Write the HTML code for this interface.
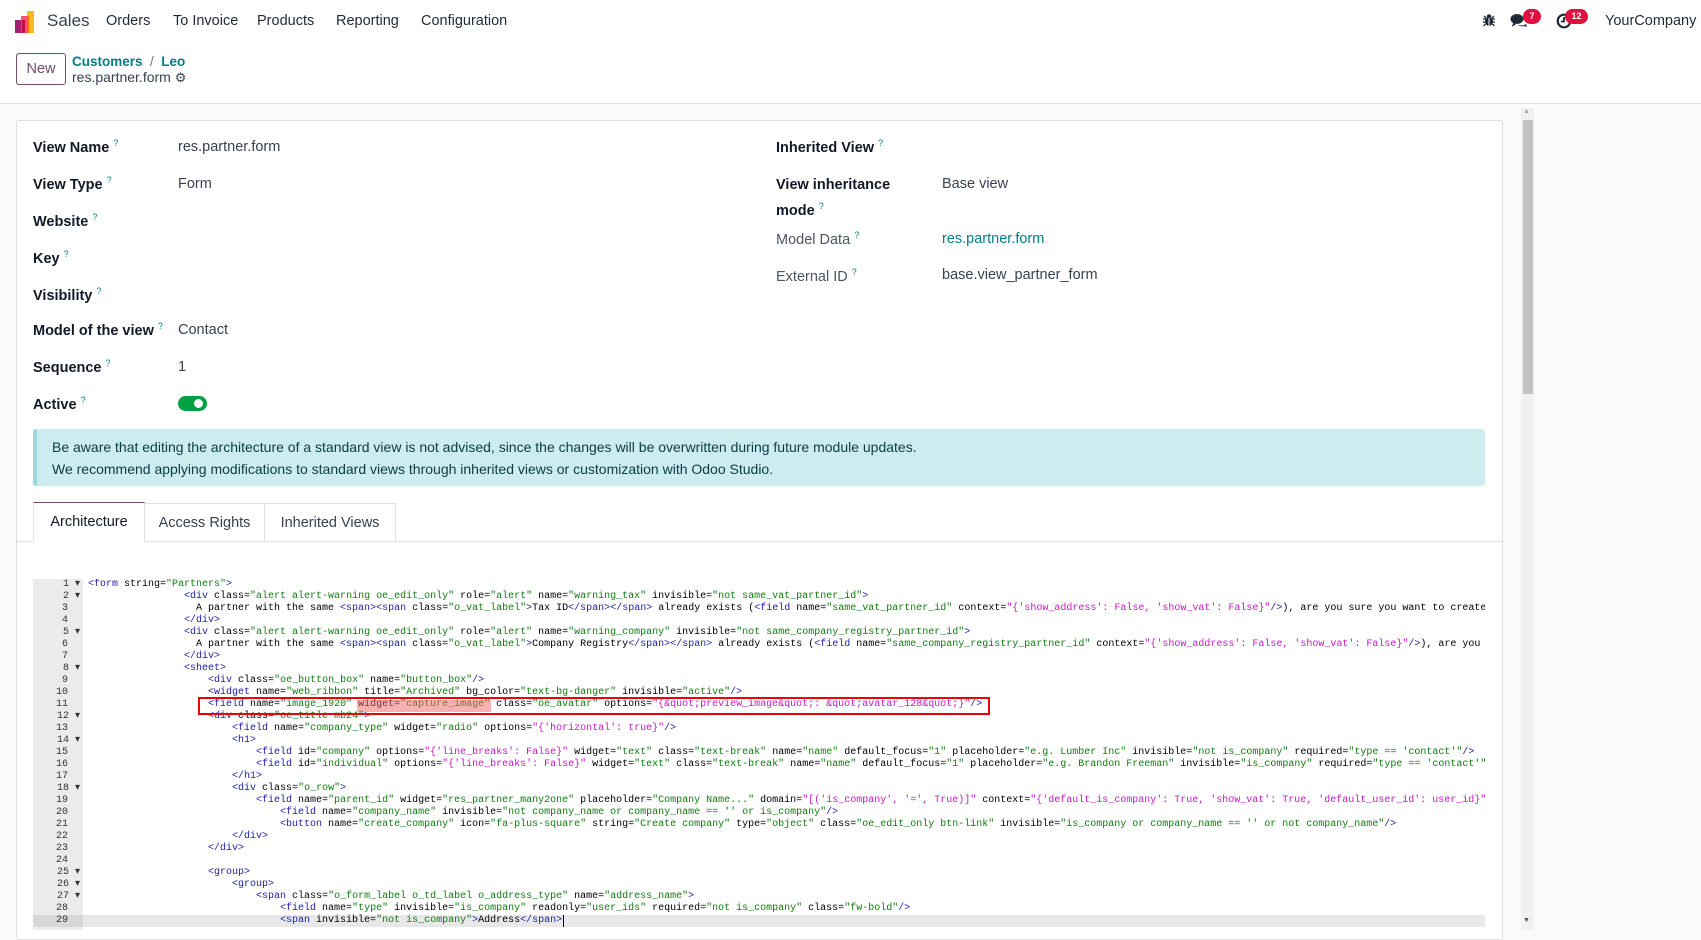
<!DOCTYPE html>
<html><head><meta charset="utf-8">
<style>
*{box-sizing:border-box;margin:0;padding:0}
body{width:1701px;height:930px;overflow:hidden;background:#f9fafb;font-family:"Liberation Sans",sans-serif;color:#374151;position:relative;font-size:14px}
.abs{position:absolute;white-space:nowrap}
#top{position:absolute;left:0;top:0;width:1701px;height:104px;background:#fff;border-bottom:1px solid #dcdfe3}
.menu{font-size:14.5px;color:#1f2937;top:13px}
.lbl{font-weight:bold;color:#111827;font-size:14.5px}
.lbl sup,.lbl2 sup{color:#017e84;font-size:9px;font-weight:normal}
.lbl2{color:#4b5563;font-size:14.5px}
.val{color:#374151;font-size:14.5px}
#card{position:absolute;left:16px;top:120px;width:1487px;height:820px;background:#fff;border:1px solid #dcdfe3;border-radius:3px}
pre{font-family:"Liberation Mono",monospace;font-size:10px;line-height:12px;color:#000;white-space:pre}
.t{color:#1d1da8}.v{color:#117a11}.m{color:#c617c6}
.badge{position:absolute;background:#e0103f;color:#fff;font-size:9px;font-weight:bold;border-radius:8px;height:15px;line-height:15px;text-align:center}
</style></head><body>
<div id="top"></div>
<div class="abs" style="left:15px;top:20px;width:8px;height:13px;background:#a3206f"></div>
<div class="abs" style="left:21px;top:16px;width:7px;height:17px;background:#f0465a;opacity:.9"></div>
<div class="abs" style="left:22px;top:20px;width:3px;height:13px;background:#c10f45"></div>
<div class="abs" style="left:27px;top:11px;width:7px;height:22px;background:#fbb823"></div>
<div class="abs" style="left:27px;top:16px;width:2px;height:17px;background:#f86a12"></div>
<div class="abs" style="left:47px;top:11px;font-size:17px;color:#374151">Sales</div>
<div class="abs menu" style="left:106px">Orders</div>
<div class="abs menu" style="left:173px">To Invoice</div>
<div class="abs menu" style="left:257px">Products</div>
<div class="abs menu" style="left:336px">Reporting</div>
<div class="abs menu" style="left:421px">Configuration</div>
<svg class="abs" style="left:1482px;top:13px" width="14" height="14" viewBox="0 0 14 14"><ellipse cx="7" cy="8.5" rx="4" ry="4.5" fill="#1f2937"/><circle cx="7" cy="3.5" r="2.3" fill="#1f2937"/><path d="M1 6h12M1 9h12M1.5 13l2-2M12.5 13l-2-2M2 3l2 2M12 3l-2 2" stroke="#1f2937" stroke-width="1.3"/><path d="M7 5v8" stroke="#fff" stroke-width="1"/></svg>
<svg class="abs" style="left:1510px;top:13px" width="18" height="16" viewBox="0 0 18 16"><ellipse cx="7" cy="6" rx="6.5" ry="5" fill="#1f2937"/><path d="M3 10l-1 4 4-3z" fill="#1f2937"/><path d="M9 12q4 1 7-1l1 3-3-1q-3 1-6-1z" fill="#1f2937"/></svg>
<div class="badge" style="left:1523px;top:9px;width:18px">7</div>
<svg class="abs" style="left:1556px;top:13px" width="16" height="16" viewBox="0 0 16 16"><circle cx="8" cy="8" r="6.3" fill="none" stroke="#1f2937" stroke-width="2.2"/><path d="M8 4v4.5h-3" fill="none" stroke="#1f2937" stroke-width="1.8"/></svg>
<div class="badge" style="left:1565px;top:9px;width:23px">12</div>
<div class="abs" style="left:1605px;top:13px;font-size:14.5px;color:#1f2937">YourCompany</div>
<div class="abs" style="left:16px;top:53px;width:50px;height:32px;border:1px solid #714b67;border-radius:3px;color:#714b67;font-size:14.5px;text-align:center;line-height:30px;background:#fff">New</div>
<div class="abs" style="left:72px;top:54px;font-size:13.5px;color:#017e84;font-weight:bold">Customers <span style="color:#6b7280;font-weight:normal">&nbsp;/&nbsp;</span> Leo</div>
<div class="abs" style="left:72px;top:69px;font-size:14px;color:#374151">res.partner.form <span style="font-size:13px;color:#374151">&#9881;</span></div>
<div class="abs" style="left:1521px;top:108px;width:13px;height:822px;background:#f1f1f1"></div>
<div class="abs" style="left:1523px;top:120px;width:10px;height:274px;background:#c1c1c1"></div>
<div class="abs" style="left:1523px;top:108px;font-size:7px;color:#a3a3a3">&#9650;</div>
<div class="abs" style="left:1523px;top:917px;font-size:7px;color:#505050">&#9660;</div>
<div id="card"></div>
<div class="abs lbl" style="left:33px;top:138px">View Name <sup>?</sup></div><div class="abs val" style="left:178px;top:139px">res.partner.form</div>
<div class="abs lbl" style="left:33px;top:175px">View Type <sup>?</sup></div><div class="abs val" style="left:178px;top:176px">Form</div>
<div class="abs lbl" style="left:33px;top:212px">Website <sup>?</sup></div>
<div class="abs lbl" style="left:33px;top:249px">Key <sup>?</sup></div>
<div class="abs lbl" style="left:33px;top:286px">Visibility <sup>?</sup></div>
<div class="abs lbl" style="left:33px;top:321px">Model of the view <sup>?</sup></div><div class="abs val" style="left:178px;top:322px">Contact</div>
<div class="abs lbl" style="left:33px;top:358px">Sequence <sup>?</sup></div><div class="abs val" style="left:178px;top:359px">1</div>
<div class="abs lbl" style="left:33px;top:395px">Active <sup>?</sup></div>
<div class="abs" style="left:178px;top:396px;width:29px;height:15px;border-radius:8px;background:#00a142"></div>
<div class="abs" style="left:194px;top:399px;width:9px;height:9px;border-radius:50%;background:#fff"></div>
<div class="abs lbl" style="left:776px;top:138px">Inherited View <sup>?</sup></div>
<div class="abs lbl" style="left:776px;top:175px;line-height:21px">View inheritance<br>mode <sup>?</sup></div><div class="abs val" style="left:942px;top:176px">Base view</div>
<div class="abs lbl2" style="left:776px;top:230px">Model Data <sup>?</sup></div><div class="abs val" style="left:942px;top:231px;color:#017e84">res.partner.form</div>
<div class="abs lbl2" style="left:776px;top:267px">External ID <sup>?</sup></div><div class="abs val" style="left:942px;top:267px">base.view_partner_form</div>
<div class="abs" style="left:33px;top:429px;width:1452px;height:57px;background:#cdecf0;border-left:4px solid #9fd7de;border-radius:3px"></div>
<div class="abs" style="left:52px;top:437px;font-size:14px;color:#0b3a44;line-height:21.5px">Be aware that editing the architecture of a standard view is not advised, since the changes will be overwritten during future module updates.<br>We recommend applying modifications to standard views through inherited views or customization with Odoo Studio.</div>
<div class="abs" style="left:17px;top:541px;width:1485px;height:1px;background:#dcdfe3"></div>
<div class="abs" style="left:33px;top:502px;width:112px;height:40px;background:#fff;border:1px solid #dcdfe3;border-top:1px solid #714b67;border-bottom:none;font-size:14.5px;color:#111827;text-align:center;line-height:38px">Architecture</div>
<div class="abs" style="left:145px;top:503px;width:120px;height:38px;border:1px solid #dcdfe3;border-left:none;border-bottom:none;font-size:14.5px;text-align:center;line-height:38px">Access Rights</div>
<div class="abs" style="left:265px;top:503px;width:131px;height:38px;border:1px solid #dcdfe3;border-left:none;border-bottom:none;font-size:14.5px;text-align:center;line-height:38px">Inherited Views</div>
<div class="abs" style="left:33px;top:579px;width:50px;height:351px;background:#ebebeb"></div>
<div class="abs" style="left:33px;top:915px;width:1452px;height:12px;background:#e8e8e8"></div>
<div class="abs" style="left:33px;top:915px;width:50px;height:12px;background:#d8d8d8"></div>
<pre id="gut" style="position:absolute;left:33px;top:579px;width:50px;text-align:right;color:#333;padding-right:3px"></pre>
<div class="abs" style="left:88px;top:579px;width:1397px;height:351px;overflow:hidden"><pre id="code"></pre></div>
<div class="abs" style="left:198px;top:697px;width:792px;height:18px;border:2.5px solid #ee0000"></div>
<div class="abs" style="left:357px;top:700px;width:134px;height:12px;background:rgba(240,100,100,.5)"></div>
<div class="abs" style="left:563px;top:915px;width:1px;height:12px;background:#000"></div>
<script>
var L=[[0,'<form string="Partners">',1],[16,'<div class="alert alert-warning oe_edit_only" role="alert" name="warning_tax" invisible="not same_vat_partner_id">',1],[18,'A partner with the same <span><span class="o_vat_label">Tax ID</span></span> already exists (<field name="same_vat_partner_id" context="{\'show_address\': False, \'show_vat\': False}"/>), are you sure you want to create'],[16,'</div>'],[16,'<div class="alert alert-warning oe_edit_only" role="alert" name="warning_company" invisible="not same_company_registry_partner_id">',1],[18,'A partner with the same <span><span class="o_vat_label">Company Registry</span></span> already exists (<field name="same_company_registry_partner_id" context="{\'show_address\': False, \'show_vat\': False}"/>), are you'],[16,'</div>'],[16,'<sheet>',1],[20,'<div class="oe_button_box" name="button_box"/>'],[20,'<widget name="web_ribbon" title="Archived" bg_color="text-bg-danger" invisible="active"/>'],[20,'<field name="image_1920" widget="capture_image" class="oe_avatar" options="{&quot;preview_image&quot;: &quot;avatar_128&quot;}"/>'],[20,'<div class="oe_title mb24">',1],[24,'<field name="company_type" widget="radio" options="{\'horizontal\': true}"/>'],[24,'<h1>',1],[28,'<field id="company" options="{\'line_breaks\': False}" widget="text" class="text-break" name="name" default_focus="1" placeholder="e.g. Lumber Inc" invisible="not is_company" required="type == \'contact\'"/>'],[28,'<field id="individual" options="{\'line_breaks\': False}" widget="text" class="text-break" name="name" default_focus="1" placeholder="e.g. Brandon Freeman" invisible="is_company" required="type == \'contact\'"'],[24,'</h1>'],[24,'<div class="o_row">',1],[28,'<field name="parent_id" widget="res_partner_many2one" placeholder="Company Name..." domain="[(\'is_company\', \'=\', True)]" context="{\'default_is_company\': True, \'show_vat\': True, \'default_user_id\': user_id}"'],[32,'<field name="company_name" invisible="not company_name or company_name == \'\' or is_company"/>'],[32,'<button name="create_company" icon="fa-plus-square" string="Create company" type="object" class="oe_edit_only btn-link" invisible="is_company or company_name == \'\' or not company_name"/>'],[24,'</div>'],[20,'</div>'],[0,''],[20,'<group>',1],[24,'<group>',1],[28,'<span class="o_form_label o_td_label o_address_type" name="address_name">',1],[32,'<field name="type" invisible="is_company" readonly="user_ids" required="not is_company" class="fw-bold"/>'],[32,'<span invisible="not is_company">Address</span>']];
function esc(s){return s.replace(/&/g,'&amp;').replace(/</g,'&lt;').replace(/>/g,'&gt;')}
var out='',g='';
L.forEach(function(l,i){
 var s=l[1],h='',re=/(<\/?[\w]+)|(\/?>)|(="[^"]*")/g,last=0,m;
 while((m=re.exec(s))){h+=esc(s.slice(last,m.index));
  if(m[1]||m[2])h+='<span class="t">'+esc(m[0])+'</span>';
  else{var v=m[0].slice(2,-1);var c=(v[0]=='{'||v[0]=='[')?'m':'v';h+='=<span class="'+c+'">"'+esc(v)+'"</span>';}
  last=re.lastIndex;}
 h+=esc(s.slice(last));
 out+=' '.repeat(l[0])+h+'\n';
 g+=(i+1)+(l[2]?' \u25BE':'  ')+'\n';
});
document.getElementById('code').innerHTML=out;
document.getElementById('gut').textContent=g;
</script>
</body></html>
